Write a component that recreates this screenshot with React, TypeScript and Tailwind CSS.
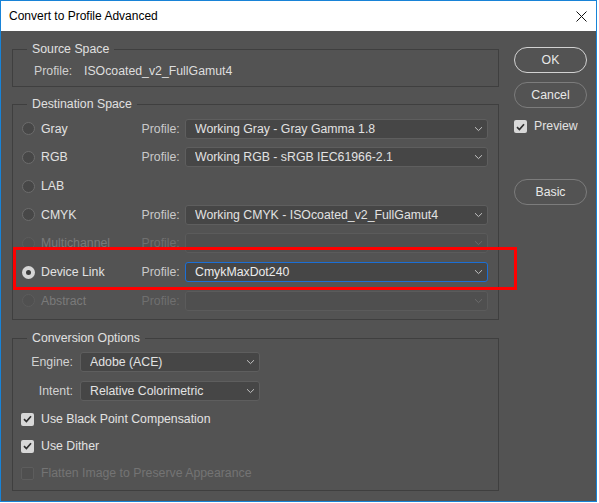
import React from 'react';
import clsx from 'clsx';

type FieldState = 'normal' | 'focused' | 'disabled';

function Chevron({ dim }: { dim?: boolean }) {
  return (
    <svg width="9" height="6" viewBox="0 0 9 6" className="shrink-0">
      <path d="M1 1.2 L4.5 4.6 L8 1.2" fill="none" stroke={dim ? '#6b6b6b' : '#c2c2c2'} strokeWidth="1" />
    </svg>
  );
}

function Select({ value, width, state = 'normal' }: { value?: string; width: string; state?: FieldState }) {
  return (
    <div
      className={clsx(
        'flex h-5 items-center rounded-[3px] border pl-[9px] pr-[4px]',
        width,
        state === 'normal' && 'border-[#5e5e5e] bg-[#464646] text-[#e2e2e2]',
        state === 'focused' && 'border-[#1b6fd6] bg-[#464646] text-[#ececec]',
        state === 'disabled' && 'border-[#5b5b5b] bg-[#4f4f4f]'
      )}
    >
      <span className="flex-1 truncate leading-[18px]">{value}</span>
      <Chevron dim={state === 'disabled'} />
    </div>
  );
}

function Radio({ checked, disabled }: { checked?: boolean; disabled?: boolean }) {
  if (checked) {
    return (
      <span className="flex h-[13px] w-[13px] shrink-0 items-center justify-center rounded-full bg-[#d6d6d6]">
        <span className="h-[5px] w-[5px] rounded-full bg-[#3c3c3c]" />
      </span>
    );
  }
  return (
    <span
      className={clsx(
        'h-[13px] w-[13px] shrink-0 rounded-full border',
        disabled ? 'border-[#5c5c5c] bg-[#505050]' : 'border-[#6c6c6c] bg-[#474747]'
      )}
    />
  );
}

function Checkbox({ checked, disabled }: { checked?: boolean; disabled?: boolean }) {
  if (!checked) {
    return (
      <span
        className={clsx(
          'h-[13px] w-[13px] shrink-0 rounded-[2px] border',
          disabled ? 'border-[#5d5d5d] bg-[#4f4f4f]' : 'border-[#6c6c6c] bg-[#474747]'
        )}
      />
    );
  }
  return (
    <span className="flex h-[13px] w-[13px] shrink-0 items-center justify-center rounded-[2px] bg-[#d8d8d8]">
      <svg width="9" height="8" viewBox="0 0 9 8">
        <path d="M1 4.2 L3.4 6.5 L8 1.3" fill="none" stroke="#2f2f2f" strokeWidth="1.7" />
      </svg>
    </span>
  );
}

function Group({ title, className, children }: { title: string; className?: string; children: React.ReactNode }) {
  return (
    <fieldset className={clsx('border border-[#3f3f3f]', className)}>
      <legend className="ml-[14px] px-[5px] leading-4 text-[#e0e0e0]">{title}</legend>
      {children}
    </fieldset>
  );
}

const spaces: { name: string; profile?: string; state?: FieldState; checked?: boolean; disabled?: boolean }[] = [
  { name: 'Gray', profile: 'Working Gray - Gray Gamma 1.8' },
  { name: 'RGB', profile: 'Working RGB - sRGB IEC61966-2.1' },
  { name: 'LAB' },
  { name: 'CMYK', profile: 'Working CMYK - ISOcoated_v2_FullGamut4' },
  { name: 'Multichannel', profile: '', state: 'disabled', disabled: true },
  { name: 'Device Link', profile: 'CmykMaxDot240', state: 'focused', checked: true },
  { name: 'Abstract', profile: '', state: 'disabled', disabled: true },
];

function DialogButton({ label, primary }: { label: string; primary?: boolean }) {
  return (
    <button
      className={clsx(
        'flex h-[26px] w-[73px] items-center justify-center rounded-full border-[1.5px] text-[#e8e8e8]',
        primary ? 'border-[#d2d2d2]' : 'border-[#7c7c7c]'
      )}
    >
      {label}
    </button>
  );
}

export default function App() {
  return (
    <div className="h-[503px] w-[599px] bg-white font-['Liberation_Sans',Arial,sans-serif] text-[12px]">
      <div className="relative flex h-[502px] w-[597px] flex-col border border-[#1883d7] bg-[#535353]">
        {/* title bar */}
        <div className="flex h-[30px] shrink-0 items-center justify-between bg-white pl-[8px] pr-[9px] text-black">
          <span>Convert to Profile Advanced</span>
          <svg width="11" height="11" viewBox="0 0 11 11">
            <path d="M0.5 0.5 L10.5 10.5 M10.5 0.5 L0.5 10.5" stroke="#111" strokeWidth="1" />
          </svg>
        </div>

        <div className="flex pl-[11px] pt-[10px] text-[12.3px]">
          <div className="flex w-[487px] flex-col">
            <Group title="Source Space">
              <div className="box-content flex h-4 items-center pb-[7px] pt-[6px] leading-4 text-[#cfcfcf]">
                <span className="ml-[21px] w-[50px]">Profile:</span>
                <span className="text-[#dedede]">ISOcoated_v2_FullGamut4</span>
              </div>
            </Group>

            <Group title="Destination Space" className="mt-[9px] pb-[4px] pt-[2.5px]">
              {spaces.map((s) => (
                <div key={s.name} className="flex h-[28.67px] items-center pl-[9px]">
                  <Radio checked={s.checked} disabled={s.disabled} />
                  <span className={clsx('ml-[6px] w-[100.5px]', s.disabled ? 'text-[#7a7a7a]' : 'text-[#e2e2e2]')}>
                    {s.name}
                  </span>
                  {s.profile !== undefined && (
                    <>
                      <span className={clsx('w-[43.5px]', s.disabled ? 'text-[#6f6f6f]' : 'text-[#c9c9c9]')}>Profile:</span>
                      <Select value={s.profile} width="w-[303px]" state={s.state} />
                    </>
                  )}
                </div>
              ))}
            </Group>

            <Group title="Conversion Options" className="mt-[10px] pb-[3px] pt-[6px]">
              <div className="flex h-5 items-center">
                <span className="w-[60px] text-right text-[#d2d2d2]">Engine:</span>
                <div className="ml-[7px]">
                  <Select value="Adobe (ACE)" width="w-[180px]" />
                </div>
              </div>
              <div className="mt-[9px] flex h-5 items-center">
                <span className="w-[60px] text-right text-[#d2d2d2]">Intent:</span>
                <div className="ml-[7px]">
                  <Select value="Relative Colorimetric" width="w-[180px]" />
                </div>
              </div>
              <div className="mt-[4.5px]">
                {[
                  { label: 'Use Black Point Compensation', checked: true },
                  { label: 'Use Dither', checked: true },
                  { label: 'Flatten Image to Preserve Appearance', disabled: true },
                ].map((o) => (
                  <div key={o.label} className="flex h-[27px] items-center pl-[8px]">
                    <Checkbox checked={o.checked} disabled={o.disabled} />
                    <span className={clsx('ml-[7px]', o.disabled ? 'text-[#747474]' : 'text-[#e2e2e2]')}>{o.label}</span>
                  </div>
                ))}
              </div>
            </Group>
          </div>

          <div className="ml-[15px] flex w-[73px] flex-col pt-[6px]">
            <DialogButton label="OK" primary />
            <div className="mt-[9px]">
              <DialogButton label="Cancel" />
            </div>
            <div className="mt-[10.5px] flex h-4 items-center">
              <Checkbox checked />
              <span className="ml-[7px] text-[#e2e2e2]">Preview</span>
            </div>
            <div className="mt-[44.5px]">
              <DialogButton label="Basic" />
            </div>
          </div>
        </div>

        {/* highlight around the Device Link row */}
        <div className="pointer-events-none absolute left-[12px] top-[246px] h-[43px] w-[504px] border-[3px] border-[#ff0000]" />
      </div>
    </div>
  );
}
